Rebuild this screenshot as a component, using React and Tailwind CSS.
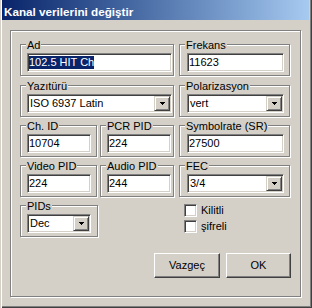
import React from "react";

const sunken =
  "bg-white border border-t-[#808080] border-l-[#808080] border-r-white border-b-white shadow-[inset_1px_1px_0_#404040,inset_-1px_-1px_0_#d4d0c8]";
const raisedSmall =
  "bg-[#d4d0c8] border border-t-[#d4d0c8] border-l-[#d4d0c8] border-r-[#404040] border-b-[#404040] shadow-[inset_1px_1px_0_#fff,inset_-1px_-1px_0_#808080]";
const raisedBtn =
  "bg-[#d4d0c8] border border-t-white border-l-white border-r-[#404040] border-b-[#404040] shadow-[inset_-1px_-1px_0_#808080]";

function Group({ label, className, children }) {
  return (
    <div
      className={
        "relative h-[32px] border border-[#808080] shadow-[inset_1px_1px_0_#fff,1px_1px_0_#fff] pt-[8px] " +
        className
      }
    >
      <span className="absolute -top-[6px] left-[5px] bg-[#d4d0c8] px-px leading-[13px] whitespace-nowrap">
        {label}
      </span>
      {children}
    </div>
  );
}

function TextBox({ className, children }) {
  return (
    <div className={sunken + " h-[19px] flex items-center pl-[1px] leading-[13px] whitespace-nowrap " + className}>
      {children}
    </div>
  );
}

function Arrow() {
  return (
    <svg width="5" height="3" viewBox="0 0 5 3" shapeRendering="crispEdges">
      <rect x="0" y="0" width="5" height="1" fill="#000" />
      <rect x="1" y="1" width="3" height="1" fill="#000" />
      <rect x="2" y="2" width="1" height="1" fill="#000" />
    </svg>
  );
}

function Combo({ className, value }) {
  return (
    <div className={sunken + " h-[19px] flex items-center pl-[2px] pr-px leading-[13px] " + className}>
      <span className="flex-1 whitespace-nowrap">{value}</span>
      <div className={raisedSmall + " w-[16px] h-[15px] flex items-center justify-center"}>
        <Arrow />
      </div>
    </div>
  );
}

function Check({ label }) {
  return (
    <div className="flex items-center gap-[4px] h-[13px]">
      <div className={sunken + " w-[13px] h-[13px]"} />
      <span className="leading-[13px]">{label}</span>
    </div>
  );
}

export default function App() {
  return (
    <div className="w-[312px] h-[308px] bg-[#d4d0c8] font-['Liberation_Sans',Arial,sans-serif] text-[11px] text-black shadow-[inset_1px_0_0_#d4d0c8,inset_2px_0_0_#fff,inset_-1px_-1px_0_#404040,inset_-2px_-2px_0_#808080] overflow-hidden">
      <div className="ml-[2px] mr-[3px] h-[20px] bg-linear-to-r from-[#0a246a] to-[#a6caf0] pl-[2px] pt-[5px]">
        <span className="font-bold text-[11.7px] leading-[14px] text-white whitespace-nowrap block">
          Kanal verilerini değiştir
        </span>
      </div>

      <div className="mt-[10px] ml-[10px] w-[291px] h-[267px] border border-[#808080] shadow-[inset_1px_1px_0_#fff,1px_1px_0_#fff] pl-[9px] pt-[13px]">
        <div className="flex flex-col">
          {/* Row 1 */}
          <div className="flex gap-[5px]">
            <Group label="Ad" className="w-[154px] pl-[6px]">
              <TextBox className="w-[145px]">
                <span className="bg-[#0a246a] text-white">102.5 HIT Ch</span>
              </TextBox>
            </Group>
            <Group label="Frekans" className="w-[111px] pl-[7px]">
              <TextBox className="w-[97px]">11623</TextBox>
            </Group>
          </div>

          {/* Row 2 */}
          <div className="flex gap-[5px] mt-[9px]">
            <Group label="Yazıtürü" className="w-[154px] pl-[6px]">
              <Combo className="w-[145px]" value="ISO 6937 Latin" />
            </Group>
            <Group label="Polarizasyon" className="w-[111px] pl-[7px]">
              <Combo className="w-[97px]" value="vert" />
            </Group>
          </div>

          {/* Row 3 */}
          <div className="flex gap-[5px] mt-[8px]">
            <div className="flex gap-[3px] w-[154px]">
              <Group label="Ch. ID" className="w-[77px] pl-[6px]">
                <TextBox className="w-[64px]">10704</TextBox>
              </Group>
              <Group label="PCR PID" className="w-[74px] pl-[6px]">
                <TextBox className="w-[64px]">224</TextBox>
              </Group>
            </div>
            <Group label="Symbolrate (SR)" className="w-[111px] pl-[7px]">
              <TextBox className="w-[97px]">27500</TextBox>
            </Group>
          </div>

          {/* Row 4 */}
          <div className="flex gap-[5px] mt-[8px]">
            <div className="flex gap-[3px] w-[154px]">
              <Group label="Video PID" className="w-[77px] pl-[6px]">
                <TextBox className="w-[64px]">224</TextBox>
              </Group>
              <Group label="Audio PID" className="w-[74px] pl-[6px]">
                <TextBox className="w-[64px]">244</TextBox>
              </Group>
            </div>
            <Group label="FEC" className="w-[111px] pl-[7px]">
              <Combo className="w-[97px]" value="3/4" />
            </Group>
          </div>

          {/* Row 5 */}
          <div className="flex mt-[8px]">
            <Group label="PIDs" className="w-[78px] pl-[6px]">
              <Combo className="w-[64px]" value="Dec" />
            </Group>
            <div className="ml-[86px] -mt-px flex flex-col gap-[3px]">
              <Check label="Kilitli" />
              <Check label="şifreli" />
            </div>
          </div>

          {/* Buttons */}
          <div className="flex gap-[6px] mt-[16px] ml-[134px]">
            <button className={raisedBtn + " w-[66px] h-[25px] flex items-center justify-center leading-[13px]"}>
              Vazgeç
            </button>
            <button className={raisedBtn + " w-[65px] h-[25px] flex items-center justify-center leading-[13px]"}>
              OK
            </button>
          </div>
        </div>
      </div>
    </div>
  );
}
